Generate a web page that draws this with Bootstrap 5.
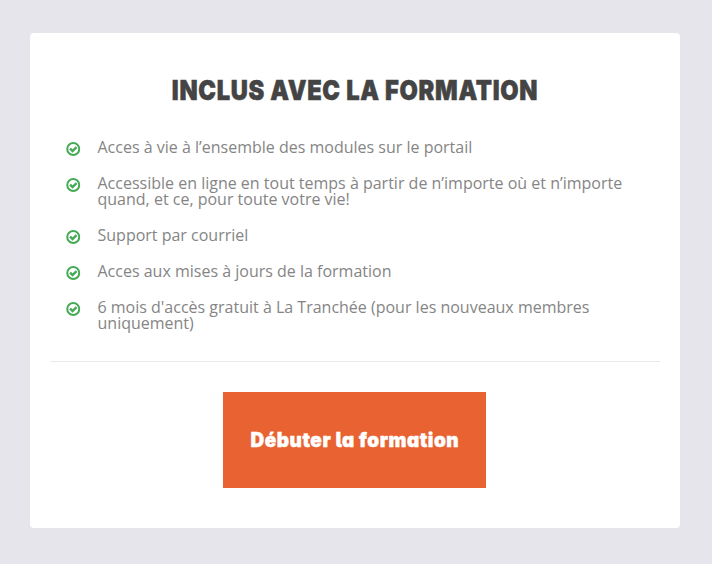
<!DOCTYPE html>
<html lang="fr">
<head>
<meta charset="utf-8">
<meta name="viewport" content="width=device-width, initial-scale=1">
<title>Inclus avec la formation</title>
<link href="https://cdn.jsdelivr.net/npm/bootstrap@5.3.0/dist/css/bootstrap.min.css" rel="stylesheet">
<style>
body{background:#e5e5eb;font-family:"Open Sans",sans-serif;color:#858585;height:564px;overflow:hidden}
.offer{margin:33px 32px 0 30px;height:495px;background:#fff;border-radius:4px;padding:41px 20px 0}
.offer-title{font:900 27.5px/33px Inter,sans-serif;color:#444;margin:0}
.offer-title span{display:inline-block;transform:scaleX(.86);letter-spacing:.8px;margin-right:-.8px;-webkit-text-stroke:.5px #444}
.perks{margin:32px 0 0;padding:0 16px}
.perks li{font-size:16px;line-height:16px;margin-bottom:20px}
.perks svg{width:14.5px;height:14px;margin:3px 17px -1px 0;flex:none}
.rule{border-top:1px solid #e9e9e9;margin:10px 0 30px}
.cta{width:263px;height:96px;background:#e96232;color:#fff;border:0;border-radius:0;padding:0;font:900 20px/24px Inter,sans-serif;font-feature-settings:"cv11","cv05";margin-right:1px}
.cta span{display:inline-block;transform:scaleX(.95);letter-spacing:.55px;-webkit-text-stroke:.4px #fff}
.cta:hover{background:#d95527;color:#fff}
</style>
</head>
<body>
<svg class="d-none"><symbol id="check" viewBox="0 0 14 14"><circle cx="7" cy="7" r="6" fill="none" stroke="#45aa55" stroke-width="2"/><path d="M3.8 6.7l2.5 2.4 4-4" fill="none" stroke="#45aa55" stroke-width="2.4"/></symbol></svg>
<main class="offer d-flex flex-column">
<h2 class="offer-title text-center text-nowrap"><span>INCLUS AVEC LA FORMATION</span></h2>
<ul class="perks list-unstyled">
<li class="d-flex"><svg><use href="#check"/></svg><span>Acces à vie à l’ensemble des modules sur le portail</span></li>
<li class="d-flex"><svg><use href="#check"/></svg><span>Accessible en ligne en tout temps à partir de n’importe où et n’importe quand, et ce, pour toute votre vie!</span></li>
<li class="d-flex"><svg><use href="#check"/></svg><span>Support par courriel</span></li>
<li class="d-flex"><svg><use href="#check"/></svg><span>Acces aux mises à jours de la formation</span></li>
<li class="d-flex"><svg><use href="#check"/></svg><span>6 mois d'accès gratuit à La Tranchée (pour les nouveaux membres uniquement)</span></li>
</ul>
<div class="rule"></div>
<button class="btn cta align-self-center text-nowrap" type="button"><span>Débuter la formation</span></button>
</main>
<script src="https://cdn.jsdelivr.net/npm/bootstrap@5.3.0/dist/js/bootstrap.bundle.min.js"></script>
</body>
</html>
